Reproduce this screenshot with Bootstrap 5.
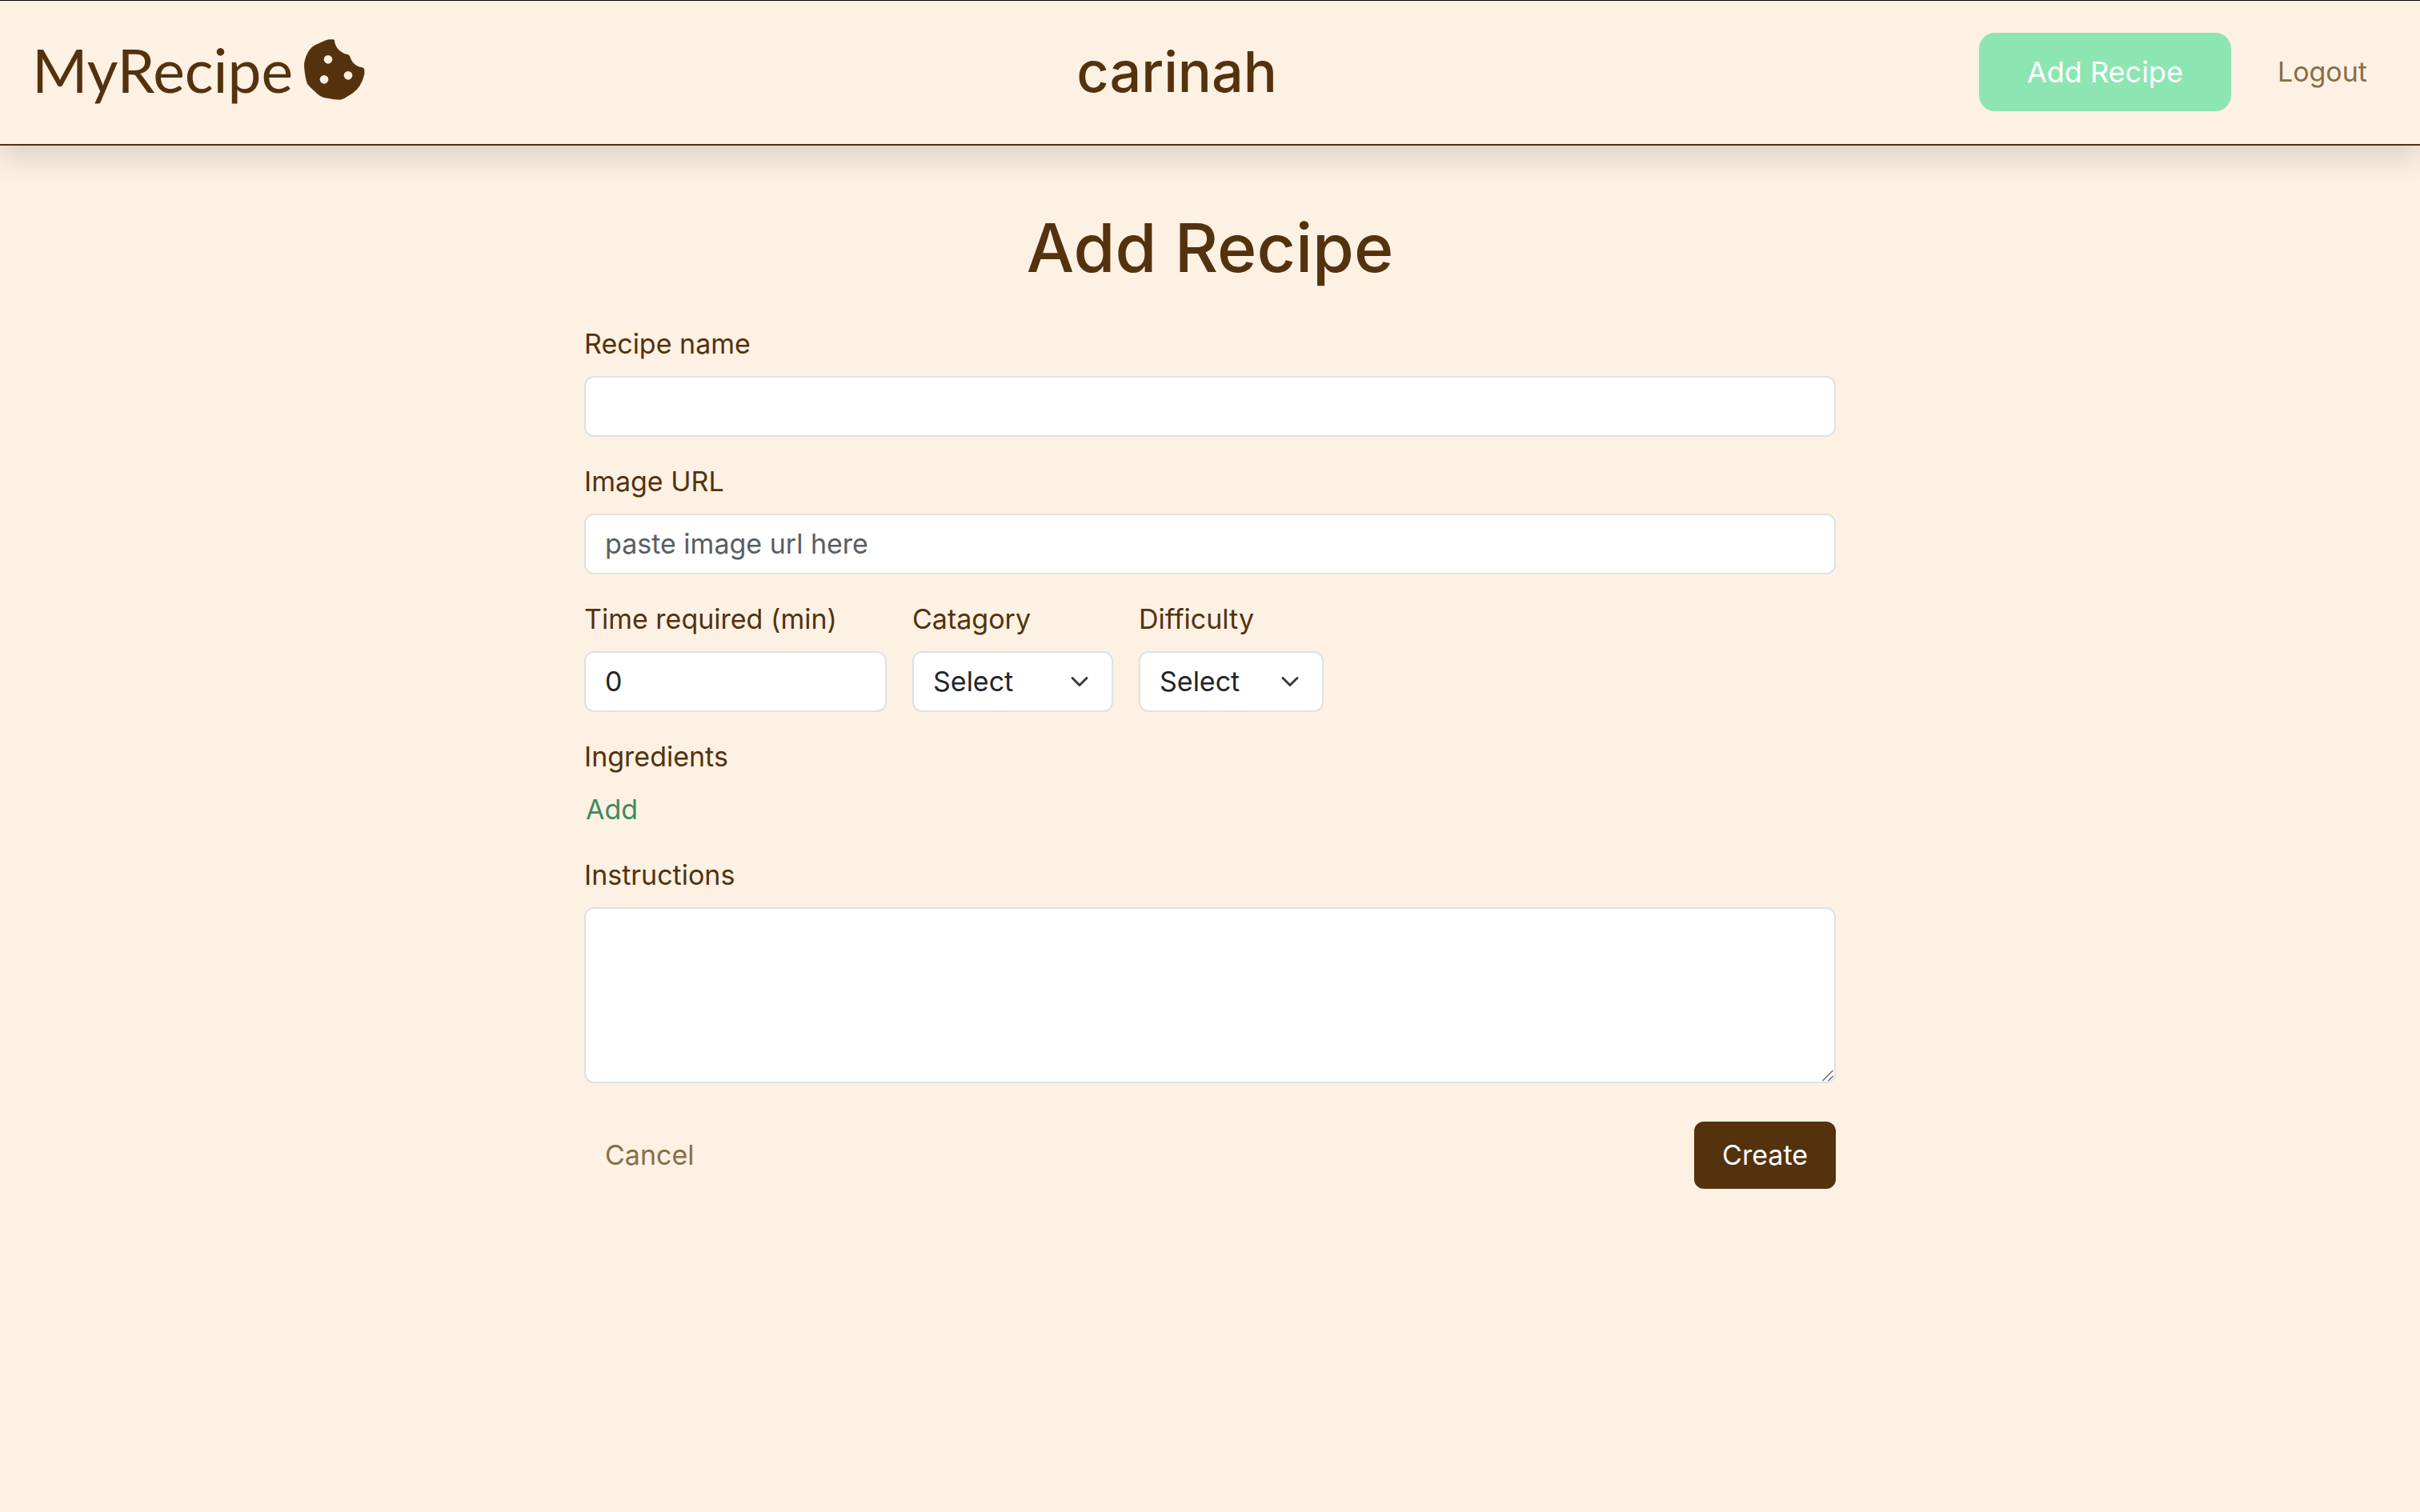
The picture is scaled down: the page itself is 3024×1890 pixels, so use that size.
<!DOCTYPE html>
<html lang="en">
<head>
<meta charset="utf-8">
<meta name="viewport" content="width=device-width, initial-scale=1">
<title>MyRecipe - Add Recipe</title>
<link href="https://cdn.jsdelivr.net/npm/bootstrap@5.3.0/dist/css/bootstrap.min.css" rel="stylesheet">
<style>
  :root {
    font-size: 32px;
    --brown: #54320e;
    --brown-soft: #8a6d4b;
    --cream: #fdf1e3;
    --mint: #8de6b2;
  }
  body {
    --bs-border-width: 2px;
    font-family: Inter, "Open Sans", sans-serif;
    font-size: 34px;
    line-height: 48px;
    color: var(--brown);
    background: var(--cream);
    border-top: 1px solid #000;
  }
  .site-bar {
    background: var(--cream);
    border-bottom: 2px solid var(--brown);
    padding: 40px 40px 41px;
  }
  .brand-link {
    font-family: Lato, sans-serif;
    font-size: 75px;
    line-height: 92px;
    padding: 0 12px 6px 0;
    gap: 14px;
    color: var(--brown);
  }
  .cookie { width: 76px; height: 76px; }
  .user-name { font-size: 70px; line-height: 76px; font-weight: 500; }
  .page-title { font-size: 84px; line-height: 96px; font-weight: 500; padding-top: 80px; }
  .btn { --bs-btn-font-size: 34px; --bs-btn-line-height: 48px; --bs-btn-border-width: 2px; line-height: 48px; }
  .btn-mint {
    --bs-btn-font-size: 36px;
    --bs-btn-color: #fff;
    --bs-btn-bg: var(--mint);
    --bs-btn-border-color: var(--mint);
    --bs-btn-padding-x: 58px;
    --bs-btn-padding-y: 23px;
    --bs-btn-border-radius: 20px;
  }
  .btn-brown {
    --bs-btn-color: #fff;
    --bs-btn-bg: var(--brown);
    --bs-btn-border-color: var(--brown);
    --bs-btn-padding-x: 33px;
    --bs-btn-padding-y: 16px;
  }
  .btn-quiet { --bs-btn-color: var(--brown-soft); }
  .btn-plus { --bs-btn-color: #3f8a5e; --bs-btn-padding-x: 0; --bs-btn-padding-y: 0; }
  .recipe-form { max-width: 1564px; }
  .form-control, .form-select { font-size: 34px; line-height: 48px; border-width: 2px; border-color: #dee2e6; }
  .form-control::placeholder { color: #5a5e63; }
  .form-select { background-size: 32px 24px; }
  .time-box { width: 378px; }
  .category-box { width: 251px; }
  .difficulty-box { width: 231px; }
  textarea.form-control { min-height: 220px; }
  textarea::-webkit-resizer {
    background: url("data:image/svg+xml,%3csvg xmlns='http://www.w3.org/2000/svg' viewBox='0 0 15 15'%3e%3cpath d='M0.5 14L13.5 1M7.5 14L13.5 8' stroke='%23666' stroke-width='1.5' fill='none'/%3e%3c/svg%3e") center / 15px 15px no-repeat;
  }
</style>
</head>
<body>
<nav class="site-bar shadow d-flex justify-content-between align-items-center">
  <a href="#" class="brand-link d-flex align-items-center text-decoration-none">
    <span>MyRecipe</span>
    <svg class="cookie" viewBox="58 57 228 228" aria-hidden="true">
      <path fill="#54320e" d="M151 58h18q4 2 4 12 6 22 22 33 12 10 28 12 7 3 9 13 6 17 22 27 9 7 22 8 8 3 8 9v16q-5 24-17 43-11 18-28 29-15 9-29 18-8 5-18 6-21 0-42-5-20-2-32-9-12-8-24-21-17-15-24-25-8-22-11-56-2-23 2-32 6-28 26-49 14-11 36-19 16-8 28-10z"/>
      <g fill="#fdf1e3"><circle cx="148" cy="133" r="16"/><circle cx="133" cy="208" r="16"/><circle cx="223" cy="193" r="16"/></g>
    </svg>
  </a>
  <h2 class="user-name m-0">carinah</h2>
  <div class="d-flex align-items-center gap-3">
    <button type="button" class="btn btn-mint">Add Recipe</button>
    <button type="button" class="btn btn-quiet">Logout</button>
  </div>
</nav>
<main class="recipe-form mx-auto">
  <h1 class="page-title text-center mt-0 mb-4">Add Recipe</h1>
  <form>
    <div class="mb-3">
      <label class="form-label" for="name">Recipe name</label>
      <input class="form-control" id="name" type="text">
    </div>
    <div class="mb-3">
      <label class="form-label" for="image">Image URL</label>
      <input class="form-control" id="image" type="text" placeholder="paste image url here">
    </div>
    <div class="d-flex gap-3 mb-3">
      <div class="time-box">
        <label class="form-label" for="time">Time required (min)</label>
        <input class="form-control" id="time" type="number" value="0">
      </div>
      <div class="category-box">
        <label class="form-label" for="category">Catagory</label>
        <select class="form-select" id="category"><option>Select</option></select>
      </div>
      <div class="difficulty-box">
        <label class="form-label" for="difficulty">Difficulty</label>
        <select class="form-select" id="difficulty"><option>Select</option></select>
      </div>
    </div>
    <div class="mb-3">
      <div class="mb-2">Ingredients</div>
      <button type="button" class="btn btn-plus d-block">Add</button>
    </div>
    <div class="mb-4">
      <label class="form-label" for="steps">Instructions</label>
      <textarea class="form-control" id="steps" rows="4"></textarea>
    </div>
    <div class="d-flex justify-content-between align-items-center">
      <button type="button" class="btn btn-quiet">Cancel</button>
      <button type="submit" class="btn btn-brown">Create</button>
    </div>
  </form>
</main>
<script src="https://cdn.jsdelivr.net/npm/bootstrap@5.3.0/dist/js/bootstrap.bundle.min.js"></script>
</body>
</html>
